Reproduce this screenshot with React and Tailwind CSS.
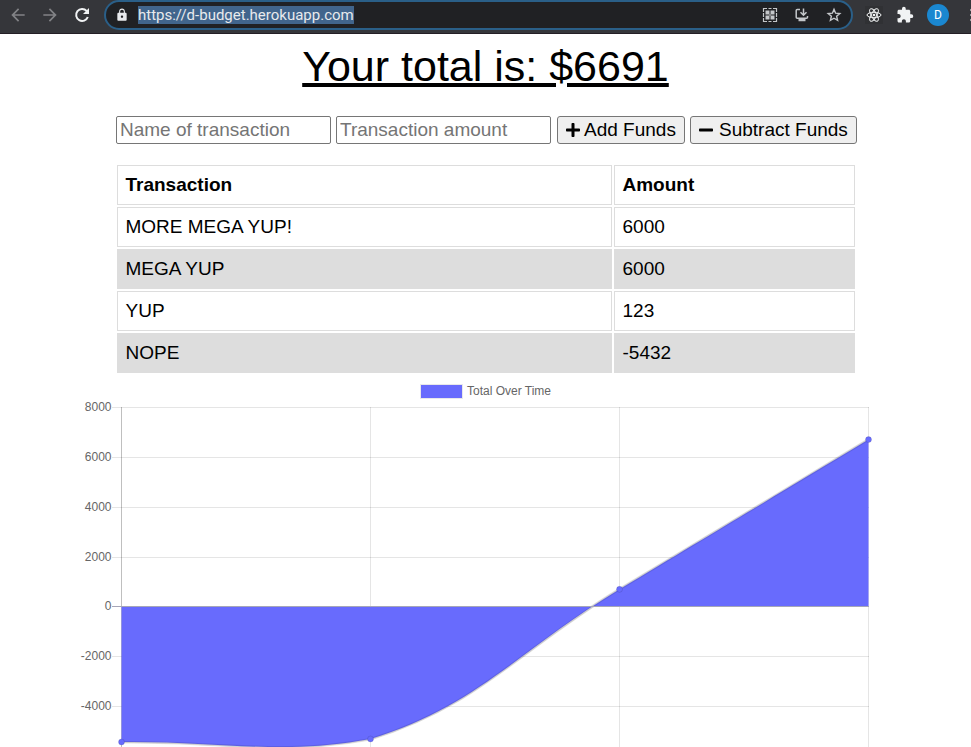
import React from "react";
import { FaPlus, FaMinus } from "react-icons/fa";
import { MdArrowBack, MdArrowForward, MdLock, MdMoreVert, MdExtension } from "react-icons/md";

const rows = [
  ["MORE MEGA YUP!", 6000],
  ["MEGA YUP", 6000],
  ["YUP", 123],
  ["NOPE", -5432],
];

const yTicks = [
  [8000, 33],
  [6000, 83],
  [4000, 133],
  [2000, 183],
  [0, 232],
  [-2000, 282],
  [-4000, 332],
];

const xTicks = [121, 370, 619, 868];

const points = [
  [121.5, 368],
  [370.5, 365],
  [619.5, 215.3],
  [868.5, 65.6],
];

const curve =
  "M121.5 368C221.1 366.8 278.6 382 370.5 365C477.8 332.1 519.9 275.2 619.5 215.3C719.1 155.4 768.9 125.5 868.5 65.6";

function ReloadIcon() {
  return (
    <svg className="size-5" viewBox="0 0 20 20" fill="none" stroke="currentColor" strokeWidth="2">
      <path d="M15.800 12A6 6 0 1 1 14.600 5.900L16 7.300" />
      <path d="M17 3V9H11Z" fill="currentColor" stroke="none" />
    </svg>
  );
}

function StarIcon() {
  return (
    <svg className="size-4" viewBox="0 0 16 16" fill="none" stroke="currentColor" strokeWidth="1.400">
      <path d="M8 2.300L9.600 6.200L13.800 6.500L10.600 9.200L11.600 13.400L8 11.200L4.400 13.400L5.400 9.200L2.200 6.500L6.400 6.200Z" />
    </svg>
  );
}

function GridIcon() {
  return (
    <svg className="size-4" viewBox="0 0 16 16" fill="none" stroke="#c4c7ca" strokeWidth="1.200">
      <path d="M1.500 5V1.500H5M6.500 1.500h3M11 1.500h3.500V5M14.500 11v3.500H11M9.500 14.500h-3M5 14.500H1.500V11M1.500 6v4M14.500 6v4" />
      <path d="M3.500 3.500h4v4h-4zM8.500 3.500h4v4h-4zM3.500 8.500h4v4h-4zM8.500 8.500h4v4h-4z" fill="#c4c7ca" stroke="none" />
      <path d="M7 7h2v2H7z" fill="#85878a" stroke="none" />
    </svg>
  );
}

function InstallIcon() {
  return (
    <svg className="size-4" viewBox="0 0 16 16" fill="none" stroke="#c4c7ca" strokeWidth="1.500">
      <path d="M6 2.500H3.200Q2.200 2.500 2.200 3.500V10.200Q2.200 11.200 3.200 11.200H12.500Q13.500 11.200 13.500 10.200V9" />
      <path d="M9.500 1.500V8M6.500 5.200L9.500 8.200L12.500 5.200" />
      <path d="M4.500 13h7" strokeWidth="2.500" />
    </svg>
  );
}

function AtomIcon() {
  return (
    <svg className="size-4" viewBox="0 0 16 16" fill="none" stroke="#f1f3f4">
      <ellipse cx="8" cy="8" rx="7" ry="2.700" />
      <ellipse cx="8" cy="8" rx="7" ry="2.700" transform="rotate(60 8 8)" />
      <ellipse cx="8" cy="8" rx="7" ry="2.700" transform="rotate(120 8 8)" />
      <circle cx="8" cy="8" r="1.300" fill="#f1f3f4" stroke="none" />
    </svg>
  );
}

function BrowserBar() {
  return (
    <header className="flex h-[34px] shrink-0 items-start overflow-hidden border-b border-[#241f25] bg-[#35363a] font-[Roboto,sans-serif]">
      <div className="flex h-[30px] w-[104px] shrink-0 items-center gap-3 pl-2">
        <button aria-label="Back" className="text-[#828386]"><MdArrowBack size={20} /></button>
        <button aria-label="Forward" className="text-[#828386]"><MdArrowForward size={20} /></button>
        <button aria-label="Reload" className="text-[#f1f3f4]"><ReloadIcon /></button>
      </div>
      <div className="flex h-[30px] min-w-0 flex-1 items-center rounded-full border-2 border-[#2a5f88] bg-[#202124] pr-[9px] pl-[9px]">
        <MdLock size={14} className="shrink-0 text-[#e8eaed]" />
        <a href="https://d-budget.herokuapp.com" className="ml-[9px] bg-[#41658c] text-[15px] leading-[18px] text-[#e8eaed]">
          https://d-budget.herokuapp.com
        </a>
        <div className="ml-auto flex shrink-0 items-center gap-4">
          <button aria-label="QR code"><GridIcon /></button>
          <button aria-label="Install"><InstallIcon /></button>
          <button aria-label="Bookmark" className="text-[#c4c7ca]"><StarIcon /></button>
        </div>
      </div>
      <div className="flex h-[30px] w-[118px] shrink-0 items-center gap-[13px] pl-3">
        <button aria-label="React tools" className="flex size-[18px] shrink-0 items-center justify-center bg-[#303134]">
          <AtomIcon />
        </button>
        <button aria-label="Extensions" className="shrink-0 text-[#f1f3f4]"><MdExtension size={18} /></button>
        <button aria-label="Profile" className="flex size-[22px] shrink-0 items-center justify-center rounded-full bg-[#1a87d0] text-[12px] text-white">
          D
        </button>
        <button aria-label="Menu" className="shrink-0 text-[#f1f3f4]"><MdMoreVert size={20} /></button>
      </div>
    </header>
  );
}

function TotalChart() {
  return (
    <svg
      role="img"
      aria-label="Total Over Time"
      className="block w-full shrink-0 font-['Liberation_Sans',Arial,sans-serif]"
      viewBox="0 1 971 400"
      fontSize="12"
      fill="#666"
    >
      <rect x="420" y="10" width="43" height="15" fill="#e8e8ea" />
      <rect x="421" y="11" width="41" height="13" fill="#686bfd" />
      <text x="467" y="21">Total Over Time</text>
      {yTicks.map(([value, y]) => (
        <g key={value}>
          <rect x="112" y={y} width="757" height="1" fill={value === 0 ? "#bfbfbf" : "#e5e5e5"} />
          <text x="111.500" y={y + 4} textAnchor="end">{value}</text>
        </g>
      ))}
      {xTicks.map((x, i) => (
        <rect key={x} x={x} y="33" width="1" height="360" fill="#000" fillOpacity={i === 0 ? 0.25 : 0.1} />
      ))}
      <path d={curve} fill="none" stroke="#000" strokeOpacity="0.1" strokeWidth="3" />
      <path d={curve + "L868.500 232.500L121.500 232.500Z"} fill="#686bfd" />
      <path d={curve} fill="none" stroke="#000" strokeOpacity="0.1" strokeWidth="2" />
      <rect x="112" y="232" width="757" height="1" fill="#a5a6b8" />
      {points.map(([x, y]) => (
        <circle key={x} cx={x} cy={y} r="3" fill="#686bfd" stroke="#000" strokeOpacity="0.1" />
      ))}
    </svg>
  );
}

const inputClass =
  "h-7 w-[215px] rounded-[2px] border border-[#767676] bg-white px-[3px] placeholder:text-[#757575]";
const buttonClass =
  "flex h-7 items-center rounded-[3px] border border-[#767676] bg-[#efefef] whitespace-nowrap";

export default function App() {
  return (
    <div className="flex h-screen flex-col overflow-hidden bg-white font-['Liberation_Sans',Arial,sans-serif] text-[19px] leading-[22px] text-black">
      <BrowserBar />
      <main className="flex min-h-0 flex-1 flex-col">
        <h1 className="mt-2 text-center text-[43px] leading-[49px] underline decoration-4">Your total is: $6691</h1>
        <form className="mt-[25px] flex justify-center gap-[6px] pl-[2px]" onSubmit={(e) => e.preventDefault()}>
          <div className="flex gap-[5px]">
            <input aria-label="Name of transaction" placeholder="Name of transaction" className={inputClass} />
            <input aria-label="Transaction amount" placeholder="Transaction amount" className={inputClass} />
          </div>
          <div className="flex gap-[5px]">
            <button type="button" className={buttonClass + " w-32 gap-[3px] pl-[7px]"}>
              <FaPlus size={16} />Add Funds
            </button>
            <button type="button" className={buttonClass + " w-[167px] gap-[5px] pl-[7px]"}>
              <FaMinus size={16} />Subtract Funds
            </button>
          </div>
        </form>
        <table className="mx-auto mt-[19px] w-[742px] max-w-full table-fixed border-separate border-spacing-[2px] text-left">
          <colgroup>
            <col className="w-[495px]" />
            <col />
          </colgroup>
          <thead>
            <tr>
              <th className="border border-[#ddd] p-2 font-bold">Transaction</th>
              <th className="border border-[#ddd] p-2 font-bold">Amount</th>
            </tr>
          </thead>
          <tbody>
            {rows.map(([name, amount]) => (
              <tr key={name} className="even:bg-[#ddd]">
                <td className="border border-[#ddd] p-2">{name}</td>
                <td className="border border-[#ddd] p-2">{amount}</td>
              </tr>
            ))}
          </tbody>
        </table>
        <TotalChart />
      </main>
    </div>
  );
}
